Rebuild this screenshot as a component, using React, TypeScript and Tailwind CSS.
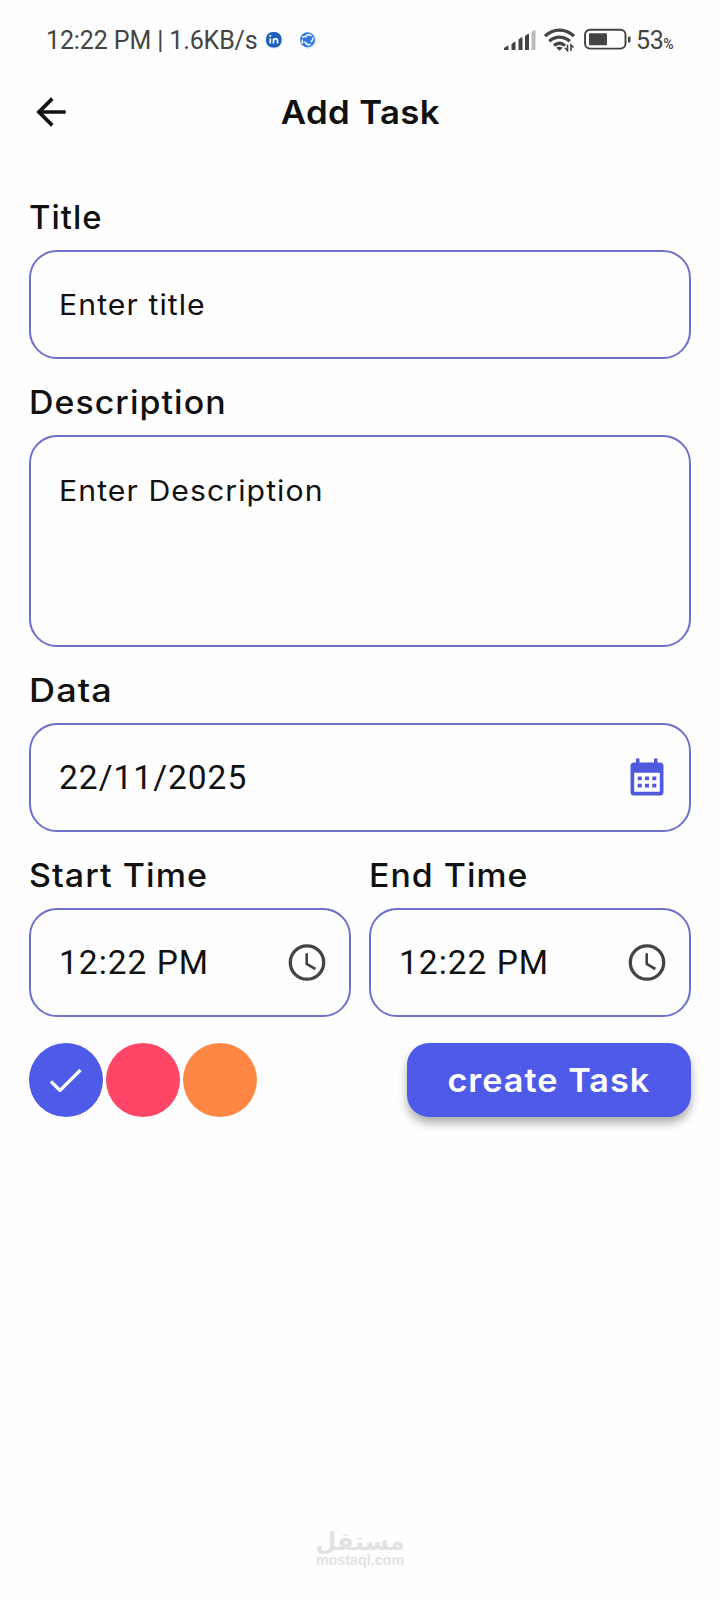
import type { ReactNode } from "react";
import { MdArrowBack } from "react-icons/md";

function StatusBar() {
  return (
    <div className="flex h-[80px] items-center pl-[46px] pr-[47px] font-[Roboto,sans-serif] text-[25px] text-[#444]">
      <span className="mt-[2px] w-[219px] whitespace-nowrap tracking-[-0.120px]">12:22 PM | 1.6KB/s</span>
      <svg className="h-[18px] w-[18px]" viewBox="0 0 18 18">
        <circle cx="9.7" cy="9.9" r="8" fill="#dceafe" />
        <rect x="1" y="1" width="15.5" height="15.5" rx="6.5" fill="#1c62b8" />
        <path d="M5.3 7.5v5M8.5 12.5v-5M8.5 10c0-3 4-3 4-.2v2.7" fill="none" stroke="#fff" strokeWidth="1.7" />
        <circle cx="5.3" cy="5.1" r="1" fill="#fff" />
      </svg>
      <svg className="ml-[16px] h-[18px] w-[18px]" viewBox="0 0 18 18">
        <circle cx="9.7" cy="9.9" r="8" fill="#dceafe" />
        <circle cx="8.5" cy="8.7" r="7.5" fill="#2f78df" />
        <path
          d="M3.200 6.500q2-1.500 4.500-.5M7 4.500q3-1.500 5.500.5M13.800 6.500q.5 2.500-2 4.500M11.500 13q-2.500 1.500-4.500 0M4 12.500q-1.500-2-.5-4M5.500 10.500q1 2 3 2.500"
          fill="none"
          stroke="#fff"
          strokeWidth="1.500"
        />
      </svg>
      <svg className="ml-auto h-[26px] w-[130px] shrink-0" viewBox="0 0 130 26">
        <g fill="#444">
          <path d="M1 23v-2q2-2 4.500-2.500V23z" />
          <path d="M8.500 23v-6q2-2 4-2.500V23z" />
          <path d="M15.500 23V12.500q2-2 4-2.500V23z" />
          <path d="M22 23V9q2-2 4-2.500V23z" />
          <path d="M28.500 23V5q2-2 4-2V23z" fill="#bbb" />
        </g>
        <g fill="none" stroke="#444" strokeWidth="3.300">
          <path d="M42 9.200c8-8.200 21-8.200 29 0" />
          <path d="M46.300 14.200c6-5.500 14.400-5.500 20.400 0" />
          <path d="M51 18.500c3.600-3 7.400-3 11 0" />
        </g>
        <path d="M53.200 20.700q3.300-2 6.600 0l-3.300 3z" fill="#444" />
        <path d="M64.500 17.500v6l-2.500-2.500M68 24v-6l2.500 2.500" fill="none" stroke="#444" strokeWidth="1.600" />
        <rect x="82" y="2.800" width="40.500" height="18.800" rx="5" fill="none" stroke="#444" strokeWidth="1.900" />
        <rect x="86" y="6.300" width="18" height="12" rx="1" fill="#444" />
        <rect x="125" y="9.500" width="2.500" height="6" rx="1" fill="#444" />
      </svg>
      <span className="ml-[3px] mt-[2px] flex items-baseline tracking-[-0.500px]">
        53<span className="text-[14px] font-medium">%</span>
      </span>
    </div>
  );
}

function Label({ children, className }: { children: ReactNode; className: string }) {
  return (
    <div
      className={
        "flex h-[44px] w-fit origin-left items-center whitespace-nowrap text-[32.500px] font-medium leading-none tracking-[1px] " +
        className
      }
    >
      {children}
    </div>
  );
}

function Field({ children, className }: { children: ReactNode; className: string }) {
  return (
    <div className={"mt-[10px] flex justify-between rounded-[28px] border-2 border-[#6d71cb] pl-[29px] pr-[20px] " + className}>
      {children}
    </div>
  );
}

function Placeholder({ children }: { children: ReactNode }) {
  return (
    <span className="relative top-px ml-[-1px] origin-left scale-x-[1.06] whitespace-nowrap text-[28.500px] leading-none tracking-[1px]">
      {children}
    </span>
  );
}

function Value({ children }: { children: ReactNode }) {
  return <span className="ml-[-1px] whitespace-nowrap font-[Roboto,sans-serif] text-[33.500px] leading-none tracking-[1px]">{children}</span>;
}

function ClockIcon() {
  return (
    <svg className="h-[44px] w-[44px]" viewBox="0 0 44 44" fill="none" stroke="#444">
      <circle cx="22" cy="21.5" r="16.700" strokeWidth="3.300" />
      <path d="M21.700 12.300v10.700l8.700 5" strokeWidth="2.600" />
    </svg>
  );
}

function CalendarIcon() {
  return (
    <svg className="mb-[2px] mr-[5px] h-[38px] w-[34px]" viewBox="0 0 34 38">
      <path
        fill="#4f59dc"
        fillRule="evenodd"
        d="M6 .5h3.500v4h14.500v-4h3.500v4H30a3.500 3.500 0 0 1 3.500 3.500v26a3.500 3.500 0 0 1-3.500 3.500H4A3.500 3.500 0 0 1 .5 34V8A3.500 3.500 0 0 1 4 4.500h2zM4.200 14.800v19h25.600v-19z"
      />
      <path fill="#4f59dc" d="M7.700 18.500h4v3.800h-4zM15 18.500h4v3.800h-4zM22.300 18.500h4v3.800h-4zM7.700 25.800h4v3.800h-4zM15 25.800h4v3.800h-4zM22.300 25.800h4v3.800h-4z" />
    </svg>
  );
}

export default function App() {
  return (
    <div className="flex h-[1600px] w-[720px] flex-col bg-[#fefefe] font-[Inter,sans-serif] text-[#111]">
      <StatusBar />
      <header className="grid h-[64px] grid-cols-[1fr_auto_1fr] items-center px-[29px]">
        <MdArrowBack className="h-[44px] w-[44px]" />
        <h1 className="scale-x-[1.055] text-[33px] font-semibold leading-none tracking-[0.300px]">Add Task</h1>
      </header>
      <main className="flex flex-col px-[29px] pt-[52px]">
        <Label className="scale-x-[1.01]">Title</Label>
        <Field className="h-[109px] items-center">
          <Placeholder>Enter title</Placeholder>
        </Field>
        <Label className="mt-[22px] scale-x-[1.043]">Description</Label>
        <Field className="h-[212px] items-start pt-[39px]">
          <Placeholder>Enter Description</Placeholder>
        </Field>
        <Label className="mt-[22px] scale-x-[1.110]">Data</Label>
        <Field className="h-[109px] items-center">
          <Value>22/11/2025</Value>
          <CalendarIcon />
        </Field>
        <div className="mt-[22px] grid grid-cols-2 gap-[18px]">
          <div>
            <Label className="scale-x-[1.048]">Start Time</Label>
            <Field className="h-[109px] items-center">
              <Value>12:22 PM</Value>
              <ClockIcon />
            </Field>
          </div>
          <div>
            <Label className="scale-x-[1.040]">End Time</Label>
            <Field className="h-[109px] items-center">
              <Value>12:22 PM</Value>
              <ClockIcon />
            </Field>
          </div>
        </div>
        <div className="mt-[26px] flex h-[74px] items-center">
          <div className="flex gap-[3.500px]">
            <div className="flex h-[73.500px] w-[73.500px] items-center justify-center rounded-full bg-[#4e5ae8]">
              <svg className="h-[24px] w-[32px]" viewBox="0 0 32 24" fill="none" stroke="#fff" strokeWidth="3.200">
                <path d="M1 13.500l9 9L30.500 2" />
              </svg>
            </div>
            <div className="h-[73.500px] w-[73.500px] rounded-full bg-[#ff4667]" />
            <div className="h-[73.500px] w-[73.500px] rounded-full bg-[#ff8746]" />
          </div>
          <button className="ml-auto flex h-[74px] w-[284px] items-center justify-center rounded-[22px] bg-[#4e5ae8] text-[33px] font-semibold leading-none text-white shadow-[0_6px_10px_rgba(0,0,0,0.320)]">
            <span className="scale-x-[1.037] whitespace-nowrap tracking-[1px]">create Task</span>
          </button>
        </div>
      </main>
      <footer className="mt-auto flex h-[73px] flex-col items-center text-[#e2e2e2]">
        <span dir="rtl" className="h-[25px] font-['DejaVu_Sans',sans-serif] text-[24.500px] font-bold leading-[30px]">مستقل</span>
        <span className="font-['Liberation_Sans',sans-serif] text-[14.300px] font-bold leading-[16px]">mostaql.com</span>
      </footer>
    </div>
  );
}
